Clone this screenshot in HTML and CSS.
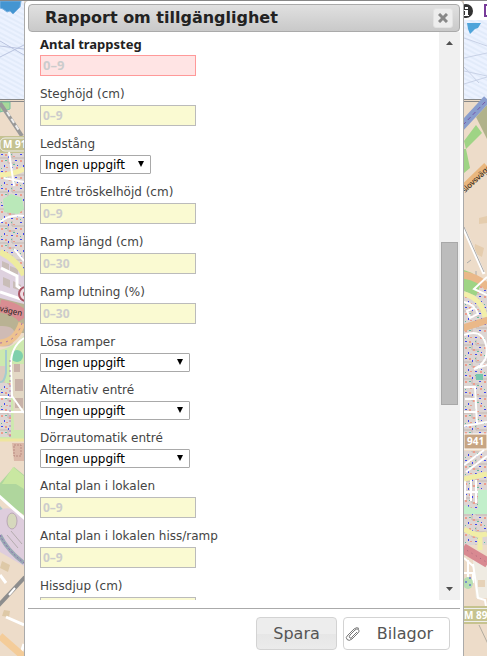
FILE: index.html
```html
<!DOCTYPE html>
<html lang="sv">
<head>
<meta charset="utf-8">
<meta name="viewport" content="width=device-width, initial-scale=1">
<title>Rapport om tillgänglighet</title>
<link rel="stylesheet" href="styles.css">
</head>
<body>
<div class="page">
  <svg class="map" viewBox="0 0 24 656" preserveAspectRatio="xMinYMin slice" aria-hidden="true">
    <defs>
      <pattern id="sea" width="60" height="9" patternUnits="userSpaceOnUse" patternTransform="rotate(28)">
        <rect width="60" height="9" fill="#ecf2ff"/><path d="M0 2H60M0 6H60" stroke="#d9e5f6"/>
      </pattern>
      <pattern id="town" width="19" height="17" patternUnits="userSpaceOnUse">
        <rect width="19" height="17" fill="#ddd5d3"/>
        <path d="M0 5h8v5h7M12 0v5h7" fill="none" stroke="#c3b8b2"/>
        <path d="M1 1h2v1H1zM8 3h1v2H8zM15 7h2v1h-2zM4 12h1v2H4zM11 14h2v1h-2zM17 12h1v1h-1z" fill="#3c45ef"/>
        <path d="M5 1h2v2H5zM13 3h2v1h-2zM1 7h2v2H1zM9 9h2v2H9zM16 14h2v2h-2zM6 14h2v1H6z" fill="#ed9d8c"/>
        <path d="M11 1h1v1h-1zM5 7h2v1H5zM13 11h2v1h-2zM1 15h1v1H1z" fill="#61bda2"/>
      </pattern>
    </defs>
    <rect width="24" height="656" fill="#eddcc9"/>
    <rect width="24" height="100" fill="url(#sea)"/>
    <path d="M0 1H21L20 7 17 10 13 14 10 11 7 12 3 9 0 8Z" fill="#4495d1" stroke="#77afe0"/>
    <path d="M0 46L24 49M0 57L24 45M0 41L24 55" stroke="#b9c3df" fill="none"/>
    <path d="M0 99.500H24M0 101.500H24" stroke="#888"/>
    <path d="M0 102H10V109L0 112Z" fill="#a8da9a" stroke="#79bea0"/>
    <path d="M0 103L22 136" stroke="#999" stroke-width="4"/><path d="M7 112L20 132" stroke="#eee" stroke-width="2" stroke-dasharray="5 3"/>
    <rect y="152" width="24" height="130" fill="url(#town)"/>
    <rect y="136" width="24" height="17" fill="#c5c291"/>
    <rect x="0" y="138" width="32" height="13" rx="5" fill="#c5c291" stroke="#eee"/>
    <text class="road-number" x="3" y="148">M 91</text>
    <path d="M3 199L11 194 22 198 24 209 18 214 4 212Z" fill="#bae8b9"/>
    <path d="M0 175Q12 175 24 169" fill="none" stroke="#f4efaa" stroke-width="5"/>
    <path d="M9 152L14 186M0 222Q10 214 24 216M4 178L24 182M14 249L24 261" stroke="#fff" stroke-width="2" fill="none"/>
    <path d="M0 252Q17 263 24 277V306L0 300Z" fill="#ded1df"/>
    <path d="M2 261l7 3v8l-7-3zM10 266l8 3v7l-8-3zM3 277l7 3v8l-7-3zM13 281l8 4v6l-8-3z" fill="#c9bdb8"/>
    <path d="M0 252Q17 260 24 275" fill="none" stroke="#eeeba0" stroke-width="6"/>
    <path d="M1 268L17 276V286L24 291M0 292L24 300" fill="none" stroke="#fff" stroke-width="3"/>
    <circle cx="26" cy="294" r="7" fill="#efdde2" stroke="#a95262" stroke-width="2"/><circle cx="26" cy="294" r="3" fill="#b65062"/>
    <path d="M0 298L24 304V333H0Z" fill="#b9b293"/>
    <path d="M0 306Q18 309 24 318" stroke="#d98d92" stroke-width="13" fill="none"/>
    <text class="street" transform="translate(-5 310) rotate(13)">evägen</text>
    <path d="M0 326Q16 325 15 337T0 346" fill="#cfbbb5"/>
    <path d="M0 343Q16 342 22 323" stroke="#edc28f" stroke-width="7" fill="none"/><path d="M0 343Q16 342 22 323" stroke="#a66fad" stroke-dasharray="2 4" fill="none"/>
    <path d="M0 350Q14 347 24 336V440H0Z" fill="#cde9ae"/>
    <path d="M0 366H5V384L0 390Z" fill="#dac9bd"/><circle cx="17" cy="356" r="6" fill="#7fd0ac"/>
    <path d="M12 364H24V430H14Z" fill="#e3d8c5"/><path d="M14 364h6v8h-6zm1 15h8v12h-8zm0 19h8v10h-8z" fill="#c8b2a8"/>
    <rect y="383" width="11" height="54" fill="url(#town)"/>
    <path d="M24 338Q10 347 11 367L12 396 24 413M0 397H12M0 412H24" fill="none" stroke="#fff" stroke-width="2"/>
    <path d="M10 360V440" stroke="#ac80b6" stroke-dasharray="2 3"/>
    <path d="M6 350V373Q4 383 0 382" stroke="#a4cbd0" fill="none" stroke-width="2"/>
    <path d="M0 440H24" stroke="#eee59f" stroke-width="3"/>
    <path d="M12 443H24V461H14Z" fill="#dbb8a8"/><path d="M14 445h7v11h-7z" fill="none" stroke="#ba8b82" stroke-dasharray="2 1"/>
    <path d="M14 467L24 475V515L0 499V483Z" fill="#afd69d"/><path d="M13 467L24 476V489L16 484 2 484Z" fill="#c9e7a1"/>
    <path d="M0 506L24 532V601L0 574Z" fill="#a7c7c9"/>
    <path d="M0 510Q12 504 24 519V587Q6 566 0 560Z" fill="#decddd"/>
    <ellipse cx="12" cy="521" rx="5" ry="8" fill="#d6d8bd" stroke="#b9a7b5"/><path d="M3 541l11 13M7 535l11 13M11 531l11 13" stroke="#b4acae"/>
    <path d="M-2 495L25 519" stroke="#fff" stroke-width="3"/>
    <path d="M0 535Q7 550 24 563" fill="none" stroke="#9aa9b4" stroke-width="4"/><path d="M0 535Q7 550 24 563" fill="none" stroke="#8a65b0" stroke-dasharray="2 2"/>
    <path d="M0 552L24 566V656H0Z" fill="#eddcc9"/>
    <path d="M2 561l8 4-2 7-8-4zM4 610l6 1-1 6-7-1z" fill="#dec9a7"/>
    <path d="M-2 606L25 577" stroke="#8d8d8d" stroke-width="4"/><path d="M9 595L15 588" stroke="#fff" stroke-width="2"/>
    <path d="M0 575L6 583M6 617L24 625M24 644L20 656" stroke="#fff" stroke-width="3"/>
    <path d="M0 636L24 657" stroke="#f4cc99" stroke-width="7"/>
  </svg>

  <section class="dialog" role="dialog" aria-labelledby="dialog-title">
    <header class="titlebar">
      <h1 id="dialog-title">Rapport om tillgänglighet</h1>
      <button class="close" type="button" aria-label="Stäng">
        <svg viewBox="0 0 10 10" aria-hidden="true"><path d="M1 1L9 9M9 1L1 9"/></svg>
      </button>
    </header>
    <form class="report">
      <div class="viewport">
        <div class="fields">
          <div class="field required"><label for="steps">Antal trappsteg</label><input id="steps" type="text" placeholder="0–9"></div>
          <div class="field"><label for="step-height">Steghöjd (cm)</label><input id="step-height" type="text" placeholder="0–9"></div>
          <div class="field"><label for="rail">Ledstång</label><span class="select short"><select id="rail"><option>Ingen uppgift</option></select><svg viewBox="0 0 6 6" aria-hidden="true"><path d="M0 0H6L3 6Z"/></svg></span></div>
          <div class="field"><label for="threshold">Entré tröskelhöjd (cm)</label><input id="threshold" type="text" placeholder="0–9"></div>
          <div class="field"><label for="ramp-length">Ramp längd (cm)</label><input id="ramp-length" type="text" placeholder="0–30"></div>
          <div class="field"><label for="ramp-slope">Ramp lutning (%)</label><input id="ramp-slope" type="text" placeholder="0–30"></div>
          <div class="field"><label for="loose-ramps">Lösa ramper</label><span class="select"><select id="loose-ramps"><option>Ingen uppgift</option></select><svg viewBox="0 0 6 6" aria-hidden="true"><path d="M0 0H6L3 6Z"/></svg></span></div>
          <div class="field"><label for="alt-entrance">Alternativ entré</label><span class="select"><select id="alt-entrance"><option>Ingen uppgift</option></select><svg viewBox="0 0 6 6" aria-hidden="true"><path d="M0 0H6L3 6Z"/></svg></span></div>
          <div class="field"><label for="auto-door">Dörrautomatik entré</label><span class="select"><select id="auto-door"><option>Ingen uppgift</option></select><svg viewBox="0 0 6 6" aria-hidden="true"><path d="M0 0H6L3 6Z"/></svg></span></div>
          <div class="field"><label for="floors">Antal plan i lokalen</label><input id="floors" type="text" placeholder="0–9"></div>
          <div class="field"><label for="lift-floors">Antal plan i lokalen hiss/ramp</label><input id="lift-floors" type="text" placeholder="0–9"></div>
          <div class="field"><label for="lift-depth">Hissdjup (cm)</label><input id="lift-depth" type="text"></div>
        </div>
        <div class="scrollbar" aria-hidden="true">
          <svg class="arrow" viewBox="0 0 7 4"><path d="M0 4H7L3.500 0Z"/></svg>
          <div class="track"><div class="thumb"></div></div>
          <svg class="arrow" viewBox="0 0 7 4"><path d="M0 0H7L3.500 4Z"/></svg>
        </div>
      </div>
      <footer class="actions">
        <button class="save" type="submit">Spara</button>
        <button class="attach" type="button">
          <svg viewBox="0 0 16 16" aria-hidden="true"><path d="M5 9L10 4Q12 2 13.500 3.500T13 7L7 13Q4 15.500 2 13.500T3 9L9 3Q12 .500 14 2.500M5 9Q3.500 11 5 12T7 11L12 6"/></svg>
          <span>Bilagor</span>
        </button>
      </footer>
    </form>
  </section>

  <svg class="map" viewBox="0 0 23 656" preserveAspectRatio="xMinYMin slice" aria-hidden="true">
    <rect width="23" height="656" fill="#eddcc9"/>
    <rect width="23" height="20" fill="#fff"/>
    <circle cx="2" cy="11" r="7" fill="#333"/><path d="M1 7h3v2H1zM0 10h4v5h1v1H0v-1h1v-4H0z" fill="#fff"/>
    <path d="M23 5H21V16H23" fill="none" stroke="#773b99" stroke-width="2"/>
    <rect y="20" width="23" height="80" fill="url(#sea)"/>
    <path d="M3 23H17L14 28 11 29 6 34 4 29Z" fill="#4fa4da"/>
    <path d="M0 38L23 46M0 58L23 53M0 71L23 76M0 84L23 77M0 67L15 83" stroke="#c8d1e6" fill="none"/>
    <path d="M0 99.500H23M0 101.500H23" stroke="#888"/>
    <path d="M12 117L23 105V139Z" fill="#b1b28b"/><path d="M-3 127L23 99" stroke="#899dce" stroke-width="8"/><path d="M-1 125L23 100" stroke="#7655a8" stroke-dasharray="4 3"/>
    <path d="M0 141L12 125 18 133 2 149ZM0 149L2 149 6 168 0 173Z" fill="#9fd485"/>
    <path d="M0 188L23 166" stroke="#e9b77e" stroke-width="8"/><text class="street" transform="translate(1 193) rotate(-43)">slovsvägen</text>
    <path d="M15 218l8-2v7l-8 1zM11 244l9 4-2 9-8-4z" fill="#e5cdae"/>
    <path d="M0 229L20 274" stroke="#fff" stroke-width="3"/><path d="M0 227L20 272M3 263l4-3M12 271v8" stroke="#aaa"/>
    <path d="M0 284H23V440H0Z" fill="url(#town)"/>
    <path d="M0 270L8 273 17 284 12 296 0 291Z" fill="#9fd485"/>
    <path d="M-1 275Q15 277 24 288M-1 328L24 320" fill="none" stroke="#eab889" stroke-width="7"/>
    <path d="M0 294Q18 299 21 317" fill="none" stroke="#f3efaa" stroke-width="5"/>
    <path d="M0 302Q11 304 14 314L6 318 3 311 10 308M23 277L10 289 23 295M0 335Q18 328 22 345T10 369L23 365M0 387H11L13 424 0 426M1 399H12M0 412H13M12 424L23 422" fill="none" stroke="#fff" stroke-width="2"/>
    <path d="M12 374h7v6h-7z" fill="#78c7ae"/>
    <rect y="434" width="23" height="15" fill="#c7a583" stroke="#fff"/><text class="road-number" x="3" y="445">941</text>
    <rect y="451" width="23" height="94" fill="url(#town)"/>
    <path d="M14 490H23V514H0V505L14 510Z" fill="#c2efcb"/>
    <path d="M0 465L20 450M2 472L23 456M1 480V500M7 479V501M12 480V503M0 492H14" stroke="#fff" stroke-width="2"/>
    <path d="M0 479L23 474M0 529Q12 537 23 534M16 534V550" stroke="#f1eea7" stroke-width="5" fill="none"/>
    <path d="M8 548L23 558V598H12Z" fill="#efebe2"/><path d="M-1 548L24 563" stroke="#d88991" stroke-width="10"/><path d="M-1 548L24 563" stroke="#a9667d" stroke-dasharray="1 4"/>
    <path d="M0 573H9V582H0M4 560V582M9 564L14 598 21 600 22 606M0 558L9 566" stroke="#fff" stroke-width="2" fill="none"/>
    <ellipse cx="4" cy="583" rx="5" ry="6" fill="#b8dfb2"/><path d="M1 582h2m2-4h2m-2 7h2" stroke="#3647dd"/>
    <path d="M14 580h7v7h-7z" fill="#e6d2b8"/>
    <rect y="606" width="23" height="18" fill="#c6c38f"/><path d="M0 608.500H23M0 621.500H23" stroke="#eee"/>
    <text class="road-number" x="0" y="619">M 89</text><path d="M15 625L24 644" stroke="#b3aca1"/>
  </svg>
</div>
</body>
</html>
```
FILE: styles.css
```css
* { box-sizing: border-box; }

body {
  margin: 0;
  background: #eddcc9;
  color: #222;
  font: 12px/20px "DejaVu Sans", Verdana, sans-serif;
}

.page {
  display: grid;
  grid-template-columns: 24px minmax(0, 1fr) 23px;
  height: 100vh;
  overflow: hidden;
  border-top: 1px solid #888;
}

.map { display: block; width: 100%; height: 100vh; margin-top: -1px; }
.road-number { font: bold 10px "Noto Sans", sans-serif; fill: #fff; }
.street { font: 8px "Noto Sans", sans-serif; fill: #222; }

.dialog {
  display: flex;
  flex-direction: column;
  min-height: 0;
  padding: 3px 3px 0;
  background: #fff;
  border: solid #aaa;
  border-width: 0 1px;
  border-radius: 4px 4px 0 0;
}

.titlebar {
  display: flex;
  align-items: center;
  justify-content: space-between;
  height: 28px;
  flex: none;
  padding: 0 6px 0 16px;
  border: 1px solid #aaa;
  border-radius: 4px;
  background: linear-gradient(#e0e0e0, #c9c9c9);
}

.titlebar h1 { margin: 0; font-size: 16px; line-height: 24px; }

.close {
  display: grid;
  place-items: center;
  width: 20px;
  height: 20px;
  padding: 0;
  border: 1px solid #e2e2e2;
  border-radius: 3px;
  background: #ededed;
}

.close svg { width: 10px; height: 10px; fill: none; stroke: #888; stroke-width: 3; }

.report { display: flex; flex: 1; flex-direction: column; min-height: 0; }
.viewport { display: flex; flex: 1; min-height: 0; overflow: hidden; }
.fields { flex: 1; min-width: 0; padding: 2px 12px 0; overflow: hidden; }
.field { padding-bottom: 8px; }

.field label { display: block; margin-bottom: 1px; color: #444; }
.required label { color: #222; font: bold 13px/20px "Noto Sans", sans-serif; }

.field input {
  display: block;
  width: 156px;
  height: 21px;
  padding: 0 2px;
  border: 1px solid #bbb;
  background: #fafad2;
  font: 12px "Noto Sans", Verdana, sans-serif;
}

.field input::placeholder { color: #ccc; font-weight: bold; opacity: 1; }
.required input { border-color: #f99; background: #ffe4e4; }
.required input::placeholder { font-size: 13px; }

.select { position: relative; display: block; width: 150px; }
.select.short { width: 111px; }

.select select {
  display: block;
  appearance: none;
  width: 100%;
  height: 19px;
  padding: 0 4px;
  border: 1px solid #a9a9a9;
  border-radius: 1px;
  background: #fff;
  color: #000;
  font: 12px "DejaVu Sans", Verdana, sans-serif;
}

.select svg { position: absolute; top: 6px; right: 7px; width: 6px; height: 6px; pointer-events: none; }

.scrollbar {
  display: flex;
  flex: none;
  flex-direction: column;
  align-items: center;
  width: 21px;
  padding: 9px 2px;
  background: #f0f0f0;
}

.arrow { flex: none; width: 7px; height: 4px; fill: #505050; }
.track { flex: 1; width: 17px; padding-top: 197px; }
.thumb { height: 32%; min-height: 163px; border: 1px solid #a8a8a8; background: #bcbcbc; }

.actions {
  display: flex;
  flex: none;
  justify-content: flex-end;
  gap: 6px;
  margin-top: 8px;
  padding: 8px 10px 6px;
  border-top: 1px solid #aaa;
}

.actions button {
  height: 33px;
  padding: 0 16px;
  border: 1px solid #d3d3d3;
  border-radius: 4px;
  color: #555;
  font: 16px "DejaVu Sans", Verdana, sans-serif;
}

.actions .save { background: linear-gradient(#ededed 50%, #e6e6e6 50%, #ebebeb); }
.actions .attach { display: flex; align-items: center; gap: 16px; padding: 0 16px 0 1px; background: #fff; }
.attach svg { width: 16px; height: 16px; fill: none; stroke: #777; stroke-width: 1; }
```
